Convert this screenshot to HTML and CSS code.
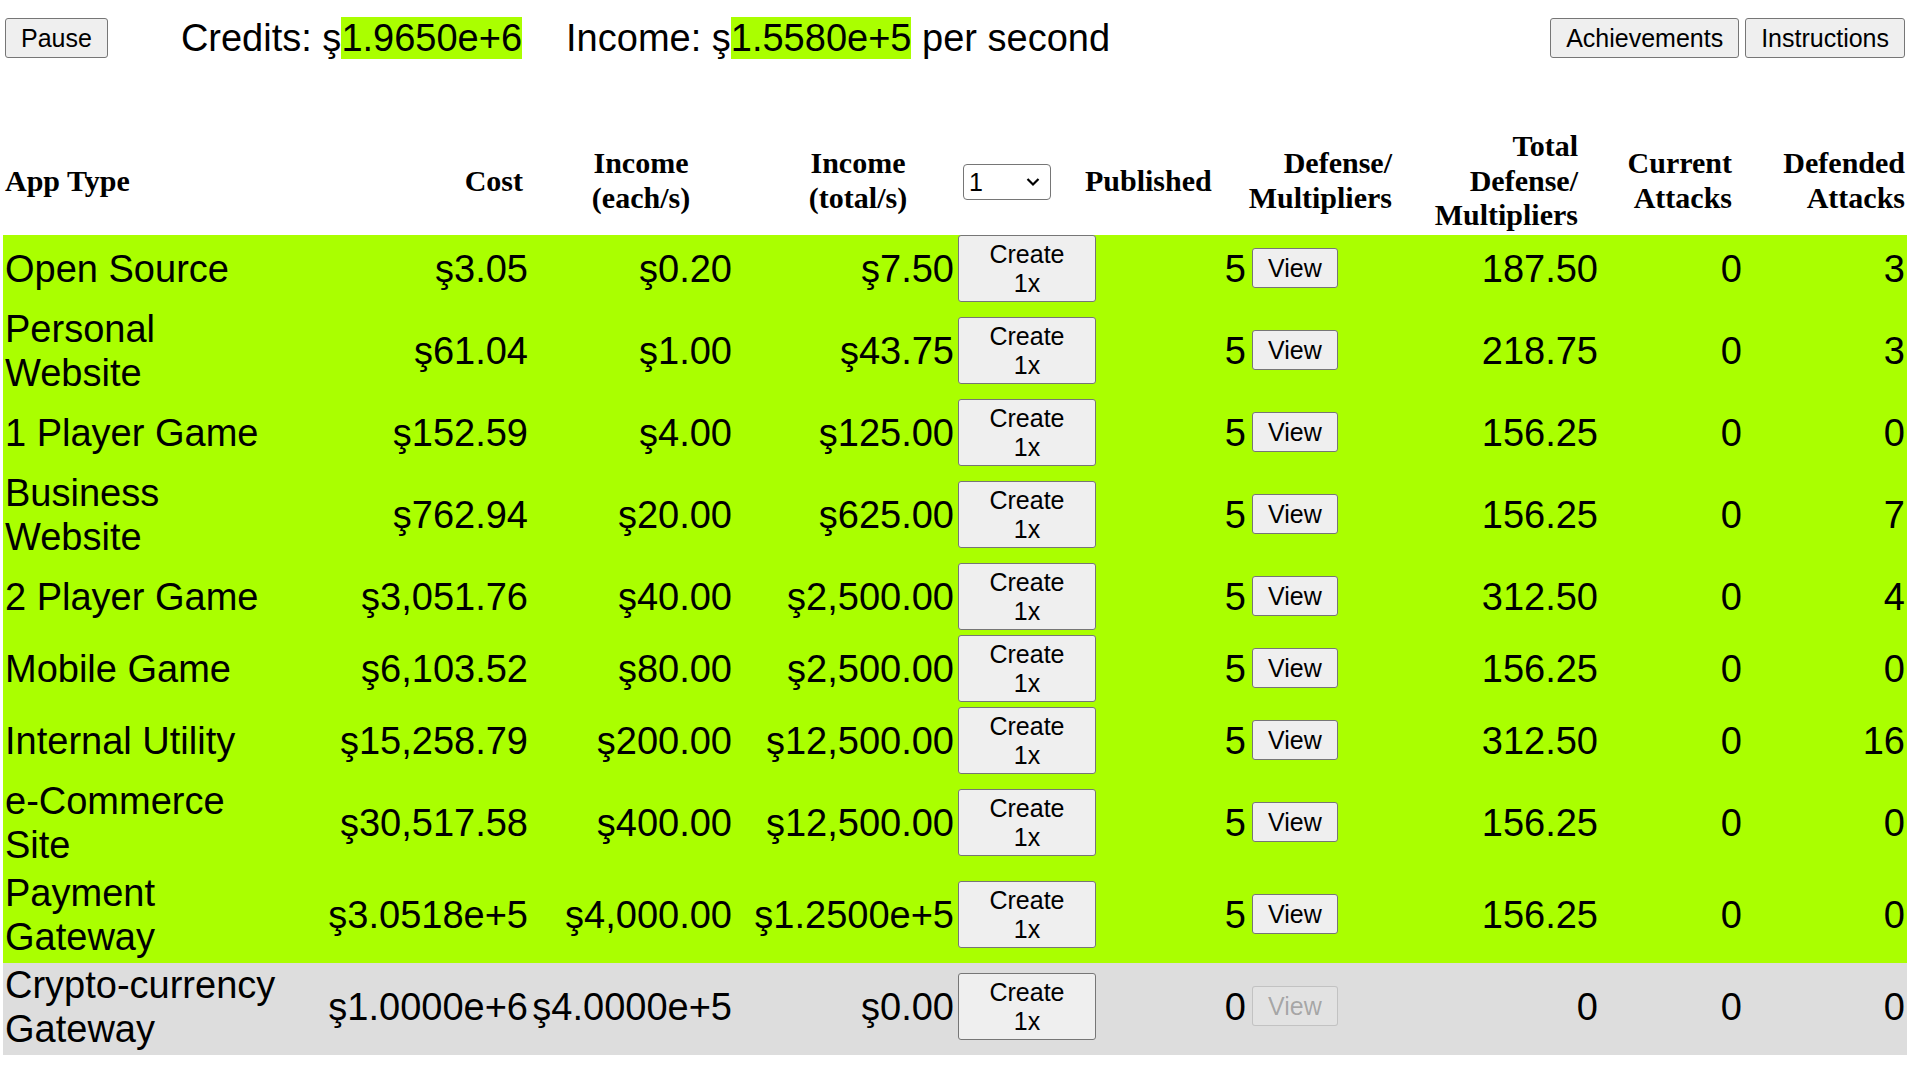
FILE: index.html
```html
<!DOCTYPE html>
<html lang="en">
<head>
<meta charset="utf-8">
<title>App Tycoon</title>
<link rel="stylesheet" href="styles.css">
</head>
<body>
<div class="topbar">
  <button class="btn">Pause</button>
  <span class="stat credits">Credits: ş<span class="hl">1.9650e+6</span></span>
  <span class="stat income">Income: ş<span class="hl">1.5580e+5</span> per second</span>
  <div class="right">
    <button class="btn">Achievements</button>
    <button class="btn">Instructions</button>
  </div>
</div>

<table class="apps">
  <colgroup>
    <col class="c1"><col class="c2"><col class="c3"><col class="c4"><col class="c5">
    <col class="c6"><col class="c7"><col class="c8"><col class="c9"><col class="c10">
  </colgroup>
  <thead>
    <tr>
      <th class="h-name">App Type</th>
      <th class="h-cost">Cost</th>
      <th class="h-ie">Income<br>(each/s)</th>
      <th class="h-it">Income<br>(total/s)</th>
      <th class="h-sel"><span class="sel"><select class="qty"><option>1</option><option>10</option><option>100</option></select><svg class="chev" width="14" height="10" viewBox="0 0 14 10"><path d="M1.5 2 L7 7.5 L12.5 2" fill="none" stroke="#000" stroke-width="2.2"/></svg></span></th>
      <th class="h-pub">Published</th>
      <th class="h-def">Defense/<br>Multipliers</th>
      <th class="h-tot">Total<br>Defense/<br>Multipliers</th>
      <th class="h-cur">Current<br>Attacks</th>
      <th class="h-dfd">Defended<br>Attacks</th>
    </tr>
  </thead>
  <tbody>
    <tr class="ok">
      <td class="name">Open Source</td><td>ş3.05</td><td>ş0.20</td><td>ş7.50</td>
      <td class="act"><button class="btn create">Create<br>1x</button></td>
      <td>5</td><td class="view"><button class="btn">View</button></td>
      <td>187.50</td><td>0</td><td>3</td>
    </tr>
    <tr class="ok">
      <td class="name">Personal Website</td><td>ş61.04</td><td>ş1.00</td><td>ş43.75</td>
      <td class="act"><button class="btn create">Create<br>1x</button></td>
      <td>5</td><td class="view"><button class="btn">View</button></td>
      <td>218.75</td><td>0</td><td>3</td>
    </tr>
    <tr class="ok">
      <td class="name">1 Player Game</td><td>ş152.59</td><td>ş4.00</td><td>ş125.00</td>
      <td class="act"><button class="btn create">Create<br>1x</button></td>
      <td>5</td><td class="view"><button class="btn">View</button></td>
      <td>156.25</td><td>0</td><td>0</td>
    </tr>
    <tr class="ok">
      <td class="name">Business Website</td><td>ş762.94</td><td>ş20.00</td><td>ş625.00</td>
      <td class="act"><button class="btn create">Create<br>1x</button></td>
      <td>5</td><td class="view"><button class="btn">View</button></td>
      <td>156.25</td><td>0</td><td>7</td>
    </tr>
    <tr class="ok">
      <td class="name">2 Player Game</td><td>ş3,051.76</td><td>ş40.00</td><td>ş2,500.00</td>
      <td class="act"><button class="btn create">Create<br>1x</button></td>
      <td>5</td><td class="view"><button class="btn">View</button></td>
      <td>312.50</td><td>0</td><td>4</td>
    </tr>
    <tr class="ok">
      <td class="name">Mobile Game</td><td>ş6,103.52</td><td>ş80.00</td><td>ş2,500.00</td>
      <td class="act"><button class="btn create">Create<br>1x</button></td>
      <td>5</td><td class="view"><button class="btn">View</button></td>
      <td>156.25</td><td>0</td><td>0</td>
    </tr>
    <tr class="ok">
      <td class="name">Internal Utility</td><td>ş15,258.79</td><td>ş200.00</td><td>ş12,500.00</td>
      <td class="act"><button class="btn create">Create<br>1x</button></td>
      <td>5</td><td class="view"><button class="btn">View</button></td>
      <td>312.50</td><td>0</td><td>16</td>
    </tr>
    <tr class="ok">
      <td class="name">e-Commerce Site</td><td>ş30,517.58</td><td>ş400.00</td><td>ş12,500.00</td>
      <td class="act"><button class="btn create">Create<br>1x</button></td>
      <td>5</td><td class="view"><button class="btn">View</button></td>
      <td>156.25</td><td>0</td><td>0</td>
    </tr>
    <tr class="ok">
      <td class="name">Payment Gateway</td><td>ş3.0518e+5</td><td>ş4,000.00</td><td>ş1.2500e+5</td>
      <td class="act"><button class="btn create">Create<br>1x</button></td>
      <td>5</td><td class="view"><button class="btn">View</button></td>
      <td>156.25</td><td>0</td><td>0</td>
    </tr>
    <tr class="locked">
      <td class="name">Crypto-currency Gateway</td><td>ş1.0000e+6</td><td>ş4.0000e+5</td><td>ş0.00</td>
      <td class="act"><button class="btn create">Create<br>1x</button></td>
      <td>0</td><td class="view"><button class="btn" disabled>View</button></td>
      <td>0</td><td>0</td><td>0</td>
    </tr>
  </tbody>
</table>
</body>
</html>
```

FILE: styles.css
```css
* { box-sizing: border-box; }

html, body {
  margin: 0;
  background: #ffffff;
}

body {
  font-family: "Liberation Sans", Arial, sans-serif;
  color: #000000;
}

.btn {
  font-family: "Liberation Sans", Arial, sans-serif;
  font-size: 25px;
  line-height: 28.5px;
  padding: 4.5px 15px;
  border: 1px solid #767676;
  border-radius: 3px;
  background: #efefef;
  color: #000000;
  margin: 0;
}

.btn:disabled {
  color: rgba(16, 16, 16, 0.3);
  background: rgba(239, 239, 239, 0.3);
  border-color: rgba(118, 118, 118, 0.3);
}

/* top bar */
.topbar {
  display: flex;
  align-items: center;
  height: 60px;
  padding: 16px 15px 0 5px;
  font-size: 38px;
  line-height: 44px;
}

.stat { white-space: nowrap; }
.credits { margin-left: 73px; }
.income { margin-left: 44px; }

.hl { background: #aaff00; }

.right {
  margin-left: auto;
  display: flex;
  gap: 6px;
}

/* table */
.apps {
  margin: 67px 0 0 3px;
  width: 1904px;
  border-spacing: 0;
  table-layout: fixed;
}

.c1 { width: 298px; }
.c2 { width: 229px; }
.c3 { width: 204px; }
.c4 { width: 222px; }
.c5 { width: 127px; }
.c6 { width: 165px; }
.c7 { width: 145px; }
.c8 { width: 207px; }
.c9 { width: 144px; }
.c10 { width: 163px; }

.apps th {
  font-family: "Liberation Serif", "Times New Roman", serif;
  font-size: 30px;
  font-weight: bold;
  line-height: 34.5px;
  padding: 2px;
  vertical-align: middle;
  white-space: nowrap;
}

.h-name { text-align: left; }
.apps th.h-cost { text-align: right; padding-right: 7px; }
.apps th.h-ie { text-align: center; padding-left: 20px; }
.apps th.h-it { text-align: center; padding-left: 28px; }
.apps th.h-sel { text-align: left; padding-left: 7px; }
.h-pub { text-align: left; }
.apps th.h-def { text-align: right; padding-left: 0; padding-right: 1px; }
.apps th.h-tot { text-align: right; padding-right: 22px; }
.apps th.h-cur { text-align: right; padding-right: 12px; }
.apps th.h-dfd { text-align: right; padding-right: 2px; }

.sel {
  position: relative;
  display: inline-block;
  vertical-align: middle;
}

.qty {
  appearance: none;
  -webkit-appearance: none;
  width: 88px;
  height: 36px;
  border: 1px solid #767676;
  border-radius: 4px;
  background: #ffffff;
  font-family: "Liberation Sans", Arial, sans-serif;
  font-size: 25px;
  padding: 0 0 0 5px;
  color: #000000;
  display: block;
}

.chev {
  position: absolute;
  right: 11px;
  top: 13px;
  pointer-events: none;
}

.apps tbody tr { height: 72px; }
.apps tr.ok { background: #aaff00; }
.apps tr.locked { background: #dddddd; }

.apps td {
  font-size: 38px;
  line-height: 44px;
  padding: 0 2px 4px 2px;
  text-align: right;
  vertical-align: middle;
}

.apps td.name { text-align: left; }
.apps td.act { text-align: left; white-space: nowrap; }
.apps td.view { text-align: left; padding-left: 4px; }

.create {
  width: 138px;
  padding: 4px 15px;
  vertical-align: middle;
}

.view .btn {
  vertical-align: middle;
  margin-bottom: 4px;
}
```
